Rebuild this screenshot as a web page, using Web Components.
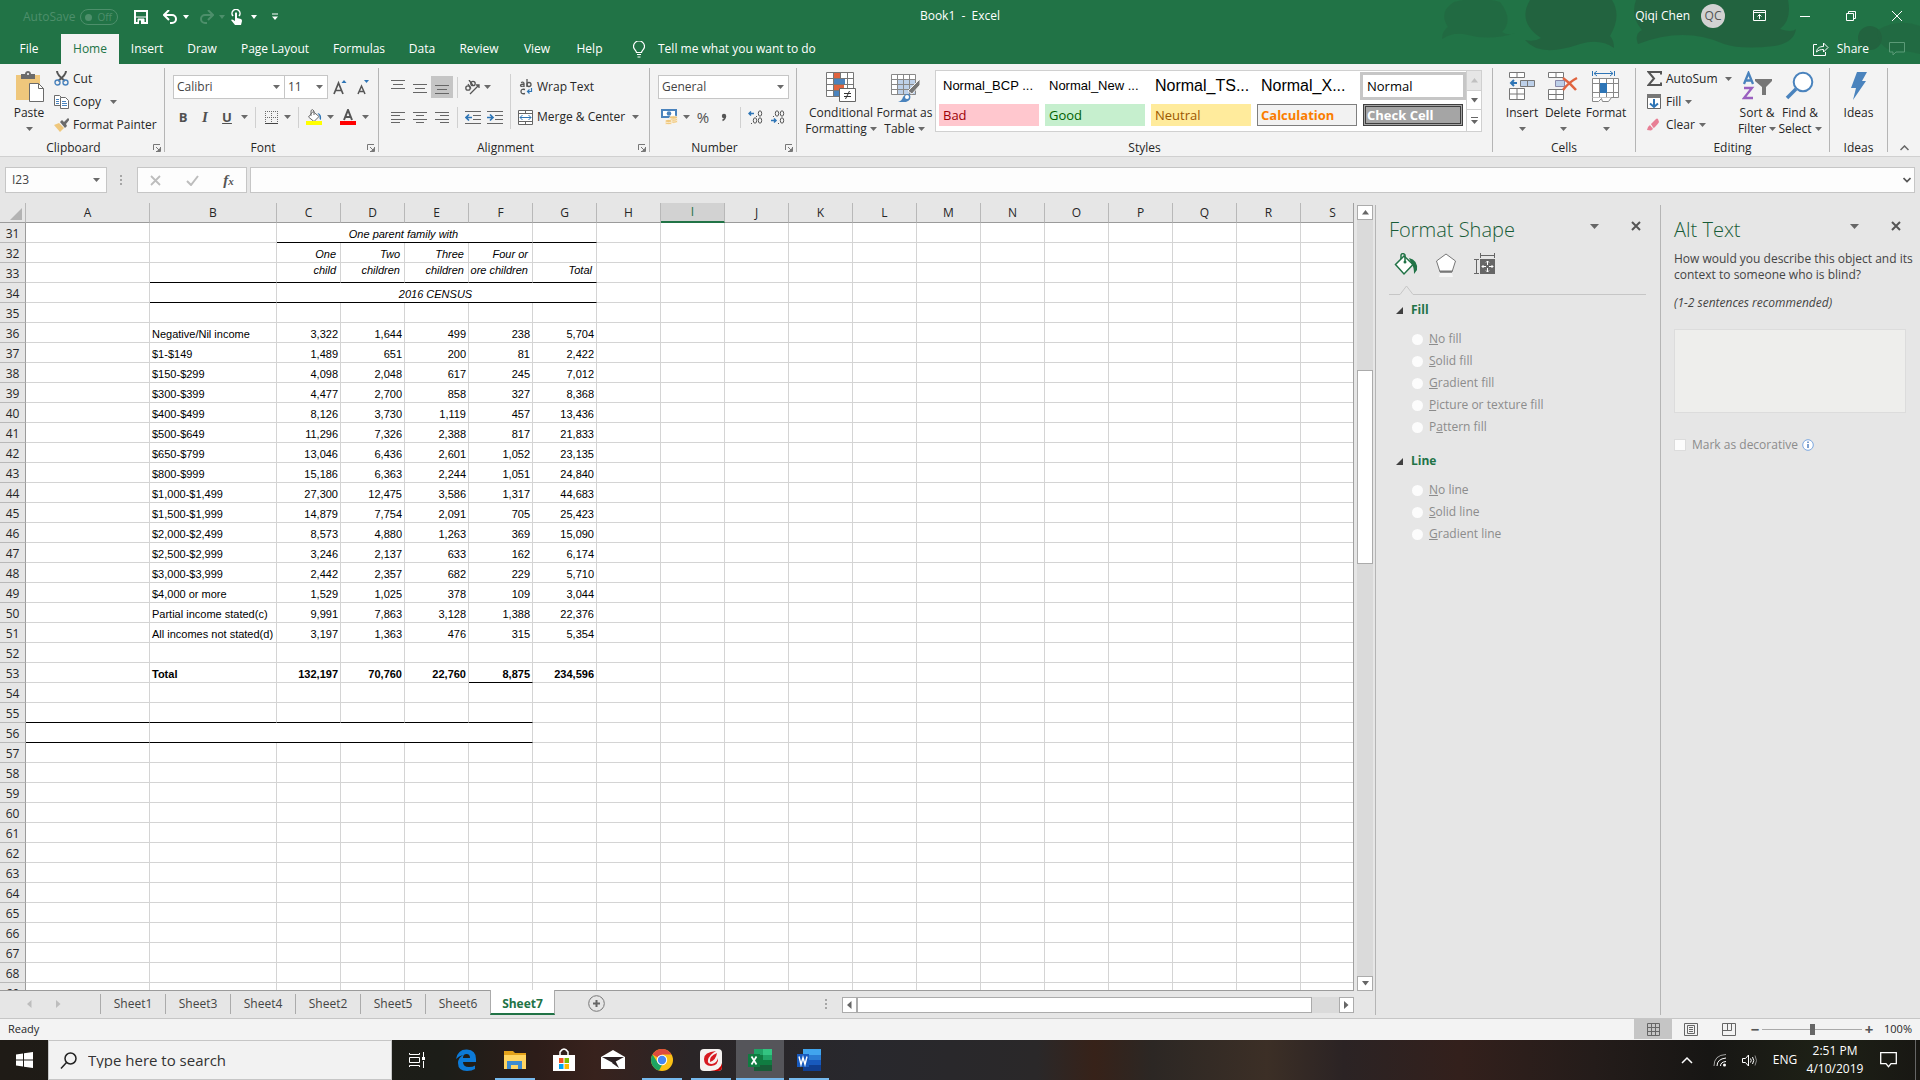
<!DOCTYPE html>
<html lang="en">
<head>
<meta charset="utf-8">
<title>Book1 - Excel</title>
<style>
    html, body {
        height: 100%;
        margin: 0;
    }
    body {
        --green: #217346;
        --ribbon: #f3f3f3;
        --chrome: #e6e6e6;
        --line: #c6c6c6;
        --ink: #262626;

        display: flex;
        flex-direction: column;
        overflow: hidden;
        background: var(--chrome);
        color: var(--ink);
        font: 12px/16px "Open Sans", "Noto Sans", sans-serif;
    }
    .workspace {
        flex: 1;
        min-height: 0;
        display: flex;
    }
    .book {
        flex: 1;
        min-width: 0;
        display: flex;
        flex-direction: column;
    }
    .stack {
        display: flex;
        flex-direction: column;
    }
    .row {
        display: flex;
        align-items: center;
        height: 22px;
    }
    .tools {
        display: flex;
        flex-direction: column;
        gap: 7px;
        padding: 8px 0 0 8px;
    }
    .tools .row:first-child {
        height: 24px;
    }
</style>
</head>
<body>
    <app-header>
        <title-bar></title-bar>
        <tab-bar></tab-bar>
    </app-header>

    <ribbon-bar>
        <ribbon-group label="Clipboard" launcher style="width:164px">
            <big-button icon="paste" caret style="width:42px;margin-left:8px">Paste</big-button>
            <div class="stack" style="margin-left:4px">
                <small-button icon="cut">Cut</small-button>
                <small-button icon="copy" caret="far">Copy</small-button>
                <small-button icon="painter">Format Painter</small-button>
            </div>
        </ribbon-group>
        <ribbon-group label="Font" launcher style="width:213px">
            <div class="tools">
                <div class="row">
                    <combo-box label="Font" value="Calibri" style="width:112px"></combo-box>
                    <combo-box label="Font size" value="11" style="width:44px"></combo-box>
                    <tool-button icon="grow" label="Increase font size" style="width:24px"></tool-button>
                    <tool-button icon="shrink" label="Decrease font size" style="width:22px"></tool-button>
                </div>
                <div class="row">
                    <tool-button label="Bold" style="width:20px"><b>B</b></tool-button>
                    <tool-button label="Italic" style="width:24px;font-family:'Liberation Serif',serif;font-size:15px"><b><i>I</i></b></tool-button>
                    <tool-button label="Underline" style="width:20px"><b><u>U</u></b></tool-button>
                    <tool-button icon="caret" label="Underline options" style="width:14px"></tool-button>
                    <tool-sep style="margin:0 4px"></tool-sep>
                    <tool-button icon="borders" label="Borders" style="width:22px"></tool-button>
                    <tool-button icon="caret" label="Border options" style="width:10px"></tool-button>
                    <tool-sep style="margin:0 5px 0 6px"></tool-sep>
                    <tool-button icon="bucket" label="Fill colour" style="width:20px"></tool-button>
                    <tool-button icon="caret" label="Fill colour options" style="width:12px"></tool-button>
                    <tool-button icon="fontcolor" label="Font colour" style="width:24px"></tool-button>
                    <tool-button icon="caret" label="Font colour options" style="width:10px"></tool-button>
                </div>
            </div>
        </ribbon-group>
        <ribbon-group label="Alignment" launcher style="width:270px">
            <div class="tools">
                <div class="row">
                    <tool-button icon="top" label="Top align" style="width:22px"></tool-button>
                    <tool-button icon="middle" label="Middle align" style="width:22px"></tool-button>
                    <tool-button icon="bottom" label="Bottom align" active style="width:22px"></tool-button>
                    <tool-sep style="margin:0 4px"></tool-sep>
                    <tool-button icon="orient" label="Orientation" style="width:20px"></tool-button>
                    <tool-button icon="caret" label="Orientation options" style="width:10px"></tool-button>
                </div>
                <div class="row">
                    <tool-button icon="left" label="Align left" style="width:22px"></tool-button>
                    <tool-button icon="center" label="Center" style="width:22px"></tool-button>
                    <tool-button icon="right" label="Align right" style="width:22px"></tool-button>
                    <tool-sep style="margin:0 4px"></tool-sep>
                    <tool-button icon="outdent" label="Decrease indent" style="width:22px"></tool-button>
                    <tool-button icon="indent" label="Increase indent" style="width:22px"></tool-button>
                </div>
            </div>
            <tool-sep style="height:55px;margin:7px 7px 0 4px"></tool-sep>
            <div class="tools" style="padding-left:0">
                <div class="row"><small-button icon="wrap">Wrap Text</small-button></div>
                <div class="row"><small-button icon="merge" caret="near">Merge &amp; Center</small-button></div>
            </div>
        </ribbon-group>
        <ribbon-group label="Number" launcher style="width:146px">
            <div class="tools">
                <div class="row"><combo-box label="Number format" value="General" style="width:131px"></combo-box></div>
                <div class="row">
                    <tool-button icon="money" label="Accounting format" style="width:22px"></tool-button>
                    <tool-button icon="caret" label="Accounting options" style="width:12px"></tool-button>
                    <tool-button label="Percent style" style="width:22px;font-size:15px">%</tool-button>
                    <tool-button icon="comma" label="Comma style" style="width:20px"></tool-button>
                    <tool-sep style="margin:0 4px 0 6px"></tool-sep>
                    <tool-button icon="incdec" label="Increase decimal" style="width:20px"></tool-button>
                    <tool-button icon="decdec" label="Decrease decimal" style="width:24px"></tool-button>
                </div>
            </div>
        </ribbon-group>
        <ribbon-group label="Styles" style="flex:1">
            <big-button icon="conditional" style="width:72px;margin-left:8px">Conditional<span slot="second">Formatting</span></big-button>
            <big-button icon="table" style="width:55px">Format as<span slot="second">Table</span></big-button>
            <style-gallery></style-gallery>
        </ribbon-group>
        <ribbon-group label="Cells" style="width:142px">
            <big-button icon="insert" caret style="width:40px;margin-left:9px">Insert</big-button>
            <big-button icon="delete" caret style="width:42px">Delete</big-button>
            <big-button icon="format" caret style="width:44px">Format</big-button>
        </ribbon-group>
        <ribbon-group label="Editing" style="width:193px">
            <div class="stack" style="width:88px;margin-left:11px">
                <small-button icon="sum" caret="near">AutoSum</small-button>
                <small-button icon="filldown" caret>Fill</small-button>
                <small-button icon="eraser" caret>Clear</small-button>
            </div>
            <big-button icon="sort" style="width:44px">Sort &amp;<span slot="second">Filter</span></big-button>
            <big-button icon="find" style="width:42px">Find &amp;<span slot="second">Select</span></big-button>
        </ribbon-group>
        <ribbon-group label="Ideas" style="width:57px">
            <big-button icon="bolt" style="width:57px">Ideas</big-button>
        </ribbon-group>
    </ribbon-bar>

    <formula-bar cell="I23"></formula-bar>

    <div class="workspace">
        <div class="book">
            <sheet-grid></sheet-grid>
            <sheet-tabs names="Sheet1,Sheet3,Sheet4,Sheet2,Sheet5,Sheet6,Sheet7" active="Sheet7"></sheet-tabs>
        </div>
        <task-pane heading="Format Shape" style="width:285px">
            <shape-options></shape-options>
        </task-pane>
        <task-pane heading="Alt Text" style="width:260px">
            <alt-text-form></alt-text-form>
        </task-pane>
    </div>

    <status-bar></status-bar>
    <win-taskbar></win-taskbar>

<script>
// name: [width, height, markup]
const ICONS = {
    caret: [7, 4, `<path d="M0 0h7L3.5 4z" fill="#6a6a6a"/>`],
    caretWhite: [6, 4, `<path d="M0 0h6L3 4z" fill="#fff"/>`],
    caretDim: [6, 4, `<path d="M0 0h6L3 4z" fill="#4d8f6b"/>`],
    launcher: [8, 8, `<path d="M.5 6V.5H7" fill="none" stroke="#777"/><path d="M3 3l3 3M7.5 3v4.500H3" fill="none" stroke="#777"/><path d="M7 4v3H4z" fill="#777"/>`],
    save: [14, 14, `<path d="M1 1h12v12H1z" fill="none" stroke="#fff" stroke-width="2"/><path d="M2 7h10M4 9h6v5H4z" fill="#fff" stroke="#fff"/><path d="M5 10.500h2V14H5z" fill="#217346"/>`],
    undo: [15, 14, `<path d="M1 5h8a4 4 0 0 1 0 8H7" fill="none" stroke="#fff" stroke-width="2"/><path d="M6 0L1 5l5 5" fill="none" stroke="#fff" stroke-width="2"/>`],
    redo: [15, 14, `<path d="M14 5H6a4 4 0 0 0 0 8h2" fill="none" stroke="#4d8f6b" stroke-width="2"/><path d="M9 0l5 5-5 5" fill="none" stroke="#4d8f6b" stroke-width="2"/>`],
    touch: [12, 17, `<path d="M2 7a4 4 0 1 1 6 0" fill="none" stroke="#fff" stroke-width="1.500"/><path d="M4 4q1-1.500 2 0v5l4 1q1 .5 1 2l-1 4H4L0 11q1-1.500 4 1z" fill="#fff"/>`],
    customize: [6, 8, `<path d="M0 1h6" stroke="#fff"/><path d="M0 3.500h6L3 7z" fill="#fff"/>`],
    ribbonmode: [13, 11, `<path d="M.5.5h12v10H.5zM.5 2.500h12" fill="none" stroke="#fff"/><path d="M6.500 9V4.500M4.500 6.500l2-2 2 2" fill="none" stroke="#fff"/>`],
    min: [10, 10, `<path d="M0 5.500h10" stroke="#fff"/>`],
    restore: [10, 10, `<path d="M.5 2.500h7v7h-7zM2.500 2.500v-2h7v7h-2" fill="none" stroke="#fff"/>`],
    close: [10, 10, `<path d="M0 0l10 10M10 0L0 10" stroke="#fff"/>`],
    bulb: [12, 17, `<path d="M3.500 11.500c0-2-3-3-3-6a5.400 5.400 0 0 1 11 0c0 3-3 4-3 6zM4 13.500h4M4.500 16h3" fill="none" stroke="#fff" stroke-width="1.200"/>`],
    share: [16, 14, `<path d="M4 2.500H.5v11h12V10" fill="none" stroke="#fff"/><path d="M3.500 10c.5-4 3-5.500 7-5.500V1l4.500 4.500L10.500 10V7.500c-3 0-5 .5-7 2.500z" fill="none" stroke="#fff"/>`],
    comment: [16, 14, `<path d="M.5.5h15v9.500H7L4 13v-3H.5z" fill="none" stroke="#5b9a77"/>`],
    paste: [30, 32, `<path d="M2 4h24v25H2z" fill="#efc77c"/><path d="M7 3h4c0-4 6-4 6 0h4v5H7z" fill="#6b6b6b"/><circle cx="14" cy="3" r="1" fill="#fff"/><path d="M15.500 12.500h9l5 5v13h-14z" fill="#fff" stroke="#6b6b6b"/><path d="M24.500 12.500v5h5" fill="none" stroke="#6b6b6b"/>`],
    cut: [15, 15, `<path d="M3 0q0 4 8 10M12 0q0 4-8 10" stroke="#555" stroke-width="2" fill="none"/><circle cx="3.500" cy="11.500" r="2.500" fill="none" stroke="#4a83bd" stroke-width="1.400"/><circle cx="11.500" cy="11.500" r="2.500" fill="none" stroke="#4a83bd" stroke-width="1.400"/>`],
    copy: [15, 14, `<path d="M.5.5h5l2 2v8h-7z" fill="#fff" stroke="#6b6b6b"/><path d="M2 4.500h3M2 6.500h3M2 8.500h3" stroke="#4a83bd"/><path d="M6.500 2.500h5l3 3v8h-8z" fill="#fff" stroke="#6b6b6b"/><path d="M8 6.500h4M8 8.500h5M8 10.500h5" stroke="#4a83bd"/>`],
    painter: [15, 14, `<path d="M0 7l5-2 5 5-4 4z" fill="#efc77c"/><path d="M6 4l2-2 2 2 4-4 1.500 1.500L12 6l1 2-2 2z" fill="#6b6b6b"/>`],
    grow: [14, 15, `<path d="M1 14L5.500 3 10 14M2.500 10.500h6" fill="none" stroke="#555" stroke-width="1.700"/><path d="M8.500 3L11 0l2.500 3z" fill="#2e75b6"/>`],
    shrink: [14, 15, `<path d="M2 14l3.500-8L9 14M3 11.500h5" fill="none" stroke="#555" stroke-width="1.500"/><path d="M8 0h5l-2.500 3z" fill="#2e75b6"/>`],
    borders: [13, 13, `<path d="M0 .5h13M0 6.500h13M.5 0v12M6.500 0v12M12.500 0v12" stroke="#6b6b6b" stroke-dasharray="1 1"/><path d="M0 12.500h13" stroke="#444"/>`],
    bucket: [16, 16, `<path d="M7 2.500l6 5-5 5L2.500 8z" fill="#fff" stroke="#6b6b6b"/><path d="M5 7V1.500Q6.500-.5 8 2v4" fill="none" stroke="#6b6b6b"/><path d="M11.500 4Q16 5 15 11q-2-1-1.500-4z" fill="#2e75b6"/><path d="M0 12h16v4H0z" fill="#ff0"/>`],
    fontcolor: [16, 16, `<path d="M4 11L8 1l4 10M5.500 8h5" fill="none" stroke="#555" stroke-width="2"/><path d="M0 12h16v4H0z" fill="red"/>`],
    top: [14, 14, `<path d="M0 .5h14M2 4.500h10M0 8.500h14" stroke="#666"/>`],
    middle: [14, 14, `<path d="M0 4.500h14M2 8.500h10M0 12.500h14" stroke="#666"/>`],
    bottom: [14, 14, `<path d="M0 5.500h14M2 9.500h10M0 13.500h14" stroke="#666"/>`],
    left: [14, 11, `<path d="M0 .5h14M0 3.500h9M0 7.500h14M0 10.500h9" stroke="#666"/>`],
    center: [14, 11, `<path d="M0 .5h14M3 3.500h8M0 7.500h14M3 10.500h8" stroke="#666"/>`],
    right: [14, 11, `<path d="M0 .5h14M5 3.500h9M0 7.500h14M5 10.500h9" stroke="#666"/>`],
    orient: [17, 15, `<g fill="none" stroke="#555" stroke-width="1.300"><circle cx="4" cy="8" r="2.200"/><path d="M4 4l3 4.500M5 0l4 5.500"/><circle cx="9" cy="3.500" r="2.200"/><path d="M6 14L15 5m-3 0h3v3"/></g>`],
    outdent: [16, 13, `<path d="M0 .5h16M8 4.500h8M8 8.500h8M0 12.500h16" stroke="#666"/><path d="M7 6.500H1M4 3.500l-3 3 3 3" fill="none" stroke="#2e75b6" stroke-width="1.700"/>`],
    indent: [16, 13, `<path d="M0 .5h16M8 4.500h8M8 8.500h8M0 12.500h16" stroke="#666"/><path d="M0 6.500h6M3 3.500l3 3-3 3" fill="none" stroke="#2e75b6" stroke-width="1.700"/>`],
    wrap: [15, 16, `<g fill="none" stroke="#555" stroke-width="1.300"><path d="M3 3.500q3-1 3 1V8M6 5q-3.500 0-3.500 1.500T6 7M9 0v8"/><circle cx="11" cy="5.500" r="2"/><path d="M7 10.500q-4-1-4 2t4 2"/></g><path d="M13.500 9v3.500H9.500m2-2l-2 2 2 2" fill="none" stroke="#2e75b6" stroke-width="1.200"/>`],
    merge: [15, 15, `<path d="M.5.5h14v14H.5zM.5 3.500h14M.5 11.500h14M7.500.5v3M7.500 11.500v3" fill="#fff" stroke="#666"/><path d="M2 7.500h11M4.500 5L2 7.500 4.500 10M10.500 5L13 7.500 10.500 10" fill="none" stroke="#2e75b6"/>`],
    money: [17, 16, `<path d="M0 0h16v9H0z" fill="#4a83bd"/><path d="M2 2h12v5H2z" fill="#fff"/><circle cx="8" cy="4.500" r="2.300" fill="#4a83bd"/><g fill="#efc77c" stroke="#fff" stroke-width=".6"><ellipse cx="12.500" cy="12.500" rx="4" ry="1.700"/><ellipse cx="12.500" cy="10.500" rx="4" ry="1.700"/><ellipse cx="12.500" cy="8.500" rx="4" ry="1.700"/><ellipse cx="7.500" cy="14" rx="3.500" ry="1.600"/><ellipse cx="7.500" cy="12" rx="3.500" ry="1.600"/></g>`],
    comma: [6, 9, `<circle cx="3" cy="3" r="2.200" fill="#555"/><path d="M4.500 3q0 3-3 4.500" fill="none" stroke="#555" stroke-width="1.400"/>`],
    incdec: [15, 14, `<path d="M6 3.500H1M3 1.500l-2 2 2 2" fill="none" stroke="#2e75b6" stroke-width="1.500"/><g fill="none" stroke="#555"><ellipse cx="12" cy="3.500" rx="1.700" ry="2.700"/><ellipse cx="7" cy="10.500" rx="1.700" ry="2.700"/><ellipse cx="12" cy="10.500" rx="1.700" ry="2.700"/></g><path d="M8 6h1v1H8zM3 13h1v1H3z" fill="#555"/>`],
    decdec: [15, 14, `<path d="M1 10.500h5M4 8.500l2 2-2 2" fill="none" stroke="#2e75b6" stroke-width="1.500"/><g fill="none" stroke="#555"><ellipse cx="7" cy="3.500" rx="1.700" ry="2.700"/><ellipse cx="12" cy="3.500" rx="1.700" ry="2.700"/><ellipse cx="12" cy="10.500" rx="1.700" ry="2.700"/></g><path d="M3 6h1v1H3zM8 13h1v1H8z" fill="#555"/>`],
    conditional: [30, 32, `<path d="M.5 1.500h27v25H.5z" fill="#fff"/><path d="M8 1h6v7H8zM8 14h10v5H8z" fill="#e0643f"/><path d="M8 8h11v6H8zM8 20h5v6H8z" fill="#4a83bd"/><path d="M.5 1.500h27v24H.5zM.5 7.500h27M.5 13.500h27M.5 19.500h27M7.500 1v25M14.500 1v7M21.500 1v25" fill="none" stroke="#777"/><path d="M13.500 17.500h16v13h-16z" fill="#fff" stroke="#666"/><path d="M18 22.500h7M18 25.500h7M23.500 20l-4 8" stroke="#333"/>`],
    table: [30, 32, `<path d="M1.500 3.500h24v20h-24z" fill="#fff"/><path d="M8 9h18v15H8z" fill="#bdd0e9"/><path d="M1.500 3.500h24v20h-24zM1.500 8.500h24M1.500 13.500h24M1.500 18.500h24M7.500 3v21M13.500 3v21M19.500 3v21" fill="none" stroke="#888"/><path d="M30 8v6l-8 9-4-3z" fill="#777" stroke="#f3f3f3"/><path d="M8 31q4-1 5-5 3-5 7-2 2 5-4 7z" fill="#4a83bd"/><circle cx="17" cy="26" r="2" fill="#fff"/>`],
    insert: [28, 30, `<path d="M1.500 1.500h15v5h-15zM9 1.500v5M1.500 17.500h15v11h-15zM9 17.500v11M1.500 23h15" fill="#fff" stroke="#777"/><path d="M12.500 9.500h14v6h-14zM19.500 9.500v6" fill="#bdd0e9" stroke="#777"/><path d="M9 12H3M6 9l-3 3 3 3" fill="none" stroke="#2e75b6" stroke-width="2"/>`],
    delete: [32, 30, `<path d="M1.500 1.500h15v5h-15zM9 1.500v5M1.500 18.500h15v10h-15zM9 18.500v10M1.500 23.500h15" fill="#fff" stroke="#777"/><path d="M8.500 9.500h9v6h-9z" fill="#bdd0e9" stroke="#88a"/><path d="M16 7q7 5 13 12M30 7q-8 4-14 12" fill="none" stroke="#e0643f" stroke-width="2.500"/>`],
    format: [30, 32, `<path d="M1.500 0v5M23.500 0v5M3 2.500h19M6 0L3 2.500 6 5M19 0l3 2.500L19 5" fill="none" stroke="#2e75b6"/><path d="M1.500 7.500h26v19h-26zM1.500 12.500h26M1.500 21.500h26M8.500 7v20M15.500 7v20M22.500 7v20" fill="#fff" stroke="#888"/><path d="M9 12h7v10H9z" fill="#2e75b6"/><path d="M1.500 26.500v4h6l3-3 1 3h6l3-4" fill="#fff" stroke="#888"/>`],
    sum: [15, 15, `<path d="M14 3.500V1H1.500L7 7.500 1.500 14H14v-2.500" fill="none" stroke="#555" stroke-width="2"/>`],
    filldown: [14, 15, `<path d="M.5.5h13v14H.5z" fill="#fff" stroke="#666"/><path d="M0 0h14v4H0z" fill="#777"/><path d="M7 5v8M3 9.500L7 13l4-3.500" fill="none" stroke="#2e75b6" stroke-width="2"/>`],
    eraser: [14, 13, `<path d="M4 6l5-5q1-1 2 0l1 3q0 1-6 7z" fill="#e87f95"/><path d="M3 7l3 4-2 1.500L0 12l1-3z" fill="#e87f95"/><path d="M3 6l4 5" stroke="#f3f3f3"/>`],
    sort: [30, 30, `<g fill="none" stroke-width="2.300"><path d="M2 13L6.500 2 11 13M3.500 9.500h6" stroke="#4a83bd"/><path d="M2 17h8L2 27h9" stroke="#9a60c0"/></g><path d="M13 8h17v2l-6 6v8h-4v-8l-7-6z" fill="#777"/>`],
    find: [30, 30, `<circle cx="18" cy="11" r="9.300" fill="#fff" stroke="#4a83bd" stroke-width="2"/><path d="M11 18l-9 9" stroke="#4a83bd" stroke-width="3.500"/>`],
    bolt: [20, 30, `<path d="M8 1h10l-5 9h4L4 29l3-12H2z" fill="#4a83bd"/>`],
    collapse: [9, 6, `<path d="M.5 5L4.500 1l4 4" fill="none" stroke="#666" stroke-width="1.500"/>`],
    expand: [8, 6, `<path d="M.5 1L4 4.500 7.500 1" fill="none" stroke="#555" stroke-width="1.700"/>`],
    cancel: [11, 11, `<path d="M1 1l9 9M10 1L1 10" stroke="#bdbdbd" stroke-width="1.800"/>`],
    accept: [13, 11, `<path d="M1 6l4 4 7-9" fill="none" stroke="#bdbdbd" stroke-width="2"/>`],
    dots: [2, 11, `<path d="M0 0h2v2H0zM0 4h2v2H0zM0 8h2v2H0z" fill="#a6a6a6"/>`],
    up: [7, 5, `<path d="M0 4.500L3.500 0 7 4.500z" fill="#666"/>`],
    upDim: [7, 5, `<path d="M0 4.500L3.500 0 7 4.500z" fill="#c0c0c0"/>`],
    down: [7, 5, `<path d="M0 0h7L3.500 4.500z" fill="#666"/>`],
    leftTri: [5, 8, `<path d="M4.500 0v8L0 4z" fill="#666"/>`],
    rightTri: [5, 8, `<path d="M0 0v8l4.500-4z" fill="#666"/>`],
    leftDim: [5, 8, `<path d="M4.500 0v8L0 4z" fill="#bdbdbd"/>`],
    rightDim: [5, 8, `<path d="M0 0v8l4.500-4z" fill="#bdbdbd"/>`],
    more: [7, 8, `<path d="M0 .5h7" stroke="#666"/><path d="M0 3h7L3.500 7z" fill="#666"/>`],
    plus: [17, 17, `<circle cx="8.500" cy="8.500" r="7.800" fill="none" stroke="#777"/><path d="M8.500 5v7M5 8.500h7" stroke="#666" stroke-width="2"/>`],
    paneCaret: [9, 5, `<path d="M0 0h9L4.500 5z" fill="#666"/>`],
    paneClose: [10, 10, `<path d="M1 1l8 8M9 1L1 9" stroke="#555" stroke-width="2"/>`],
    shapeFill: [24, 24, `<path d="M10 3l9 8.500-9 9.500-8.500-9.500z" fill="#fff" stroke="#217346" stroke-width="1.500"/><path d="M7 6V2q1.500-3 4 0v7" fill="none" stroke="#217346" stroke-width="1.500"/><circle cx="11" cy="9" r="1.500" fill="#217346"/><path d="M15 5q9 2 8 12l-3 4q0-7-2-9z" fill="#217346"/>`],
    shapeEffects: [22, 24, `<path d="M11 1l9.500 7-3.500 11H5L1.500 8z" fill="#fff" stroke="#777"/><path d="M5 18.500h12" stroke="#777" stroke-width="2"/><path d="M5 20l-1 4h14l-1-4z" fill="#fff" opacity=".6"/>`],
    shapeSize: [22, 22, `<path d="M6.500 0v5M20.500 0v5M7 2.500h13M0 6.500h5M0 20.500h5M2.500 7v13" stroke="#666"/><path d="M6 6h15v15H6z" fill="#666"/><path d="M13.500 8v4M13.500 15v4M8 13.500h4M15 13.500h4" stroke="#fff"/><path d="M12 9.500L13.500 8 15 9.500M12 17.500l1.500 1.500 1.500-1.500M9.500 12L8 13.500 9.500 15M17.500 12l1.500 1.500-1.500 1.500" fill="none" stroke="#fff"/>`],
    section: [7, 7, `<path d="M7 0v7H0z" fill="#404040"/>`],
    info: [12, 12, `<circle cx="6" cy="6" r="5.300" fill="#fff" stroke="#7ba7e0"/><path d="M6 5v4M6 2.500v1.500" stroke="#3a6fb8" stroke-width="1.300"/>`],
    normalView: [13, 13, `<path d="M.5.5h12v12H.5zM.5 4.500h12M.5 8.500h12M4.500.5v12M8.500.5v12" fill="none" stroke="#666"/>`],
    pageView: [14, 13, `<path d="M.5.5h13v12H.5zM3.500 2.500h7v8h-7zM5 4.500h4M5 6.500h4M5 8.500h4" fill="none" stroke="#666"/>`],
    breakView: [14, 13, `<path d="M.5.5h13v12H.5zM.5 7.500h9V.5M5.500.5v7" fill="none" stroke="#666"/>`],
    windows: [17, 16, `<path d="M0 2.500L7 1.500V7.500H0zM8 1.300L17 0v7.500H8zM0 8.500h7v6L0 13.500zM8 8.500h9V16l-9-1.300z" fill="#fff"/>`],
    search: [17, 17, `<circle cx="10.500" cy="6.500" r="5.500" fill="none" stroke="#222" stroke-width="1.500"/><path d="M6.500 10.500L1 16.500" stroke="#222" stroke-width="1.500"/>`],
    taskview: [17, 16, `<path d="M.5 1v1.500h10V1M.5 5.500h10v5H.5zM.5 15v-1.500h10V15M14.500 0v5M14.500 9v7" fill="none" stroke="#fff"/><path d="M13 5h3v3h-3z" fill="#fff"/>`],
    edge: [22, 22, `<path d="M1 10Q3 0 12 .5 21 1 21 10v3H8q0 5 6 5 4 0 6-1.500V20q-3 2-8 2-9 0-9-8 0-5 5-8-4 1-7 4zM8 9h7q0-4-3.500-4T8 9z" fill="#0c7ad8"/>`],
    explorer: [24, 20, `<path d="M1 1h9l2 2h11v5H1z" fill="#e3a21a"/><path d="M1 5h22v14H1z" fill="#ffd561"/><path d="M4 19v-8h15v8h-4v-4H8v4z" fill="#3c8bd0"/>`],
    store: [24, 24, `<path d="M8 7V4q4-6 8 0v3" fill="none" stroke="#fff" stroke-width="1.500"/><path d="M1 7h22v16H1z" fill="#fff"/><path d="M7 10h4.500v5H7z" fill="#f25022"/><path d="M12.500 10H17v5h-4.500z" fill="#7fba00"/><path d="M7 16h4.500v5H7z" fill="#00a4ef"/><path d="M12.500 16H17v5h-4.500z" fill="#ffb900"/>`],
    mail: [24, 20, `<path d="M0 7l12-7 12 7v12H0z" fill="#fff"/><path d="M1 7h22l-11 6z" fill="#2b2022"/><path d="M14 10l4 8-7-5z" fill="#2b2022"/>`],
    chrome: [22, 22, `<circle cx="11" cy="11" r="11" fill="#fbc116"/><path d="M11 11L1.500 5.500A11 11 0 0 1 20.500 5.500H11z" fill="#dd4b3e"/><path d="M1.500 5.500L7 14l4 2-3 5.600A11 11 0 0 1 1.500 5.500z" fill="#1da462"/><circle cx="11" cy="11" r="5.200" fill="#fff"/><circle cx="11" cy="11" r="4.200" fill="#4587f3"/>`],
    trend: [22, 22, `<rect width="22" height="22" rx="4" fill="#f5f2f0"/><path d="M10 22q11-1 12-8v4q0 4-4 4z" fill="#c40000"/><path d="M16 2Q4 3 4 10q0 7 7 7 8-1 7-8-1 5-6 6-5 0-4-4 1-5 8-9z" fill="#d71920"/><path d="M17 4q-8 3-7 9 6-2 7-9z" fill="#d71920"/>`],
    excel: [24, 22, `<path d="M6 0h18v22H6z" fill="#21a366"/><path d="M15 0h9v6h-9z" fill="#33c481"/><path d="M6 6h9v5H6z" fill="#107c41"/><path d="M15 11h9v5h-9zM6 11h9v5H6z" fill="#107c41"/><path d="M6 16h18v6H6z" fill="#185c37"/><path d="M0 5h12v13H0z" fill="#107c41"/><path d="M3.500 7.500l5 8M8.500 7.500l-5 8" stroke="#fff" stroke-width="1.700"/>`],
    word: [24, 22, `<path d="M6 0h18v6H6z" fill="#41a5ee"/><path d="M6 6h18v5H6z" fill="#2b7cd3"/><path d="M6 11h18v5H6z" fill="#185abd"/><path d="M6 16h18v6H6z" fill="#103f91"/><path d="M0 5h12v13H0z" fill="#185abd"/><path d="M2 7.500l2 8 2-7 2 7 2-8" fill="none" stroke="#fff" stroke-width="1.400"/>`],
    trayUp: [12, 8, `<path d="M1 7l5-5 5 5" fill="none" stroke="#fff" stroke-width="1.500"/>`],
    wifi: [14, 14, `<g fill="none" stroke="#fff"><path d="M1 13Q1 2 13 1.500" opacity=".6"/><path d="M4 13q0-7 9-8M7.500 13q0-4 5.500-4.500"/></g><circle cx="11.500" cy="12" r="1.500" fill="#fff"/>`],
    speaker: [16, 13, `<path d="M.5 4.500h3l3-3.500v11l-3-3.500h-3z" fill="none" stroke="#fff"/><path d="M8.500 4.500q1.500 2 0 4M10.500 3q2.500 3.500 0 7" fill="none" stroke="#fff"/><path d="M13 1.500q3 5 0 10" fill="none" stroke="#888"/>`],
    notify: [17, 16, `<path d="M.7.7h15.600v11H11l-2.500 3-2.500-3H.7z" fill="none" stroke="#fff" stroke-width="1.300"/>`],
};

const svg = name => {
    const [w, h, body] = ICONS[name];
    return `<svg width="${w}" height="${h}" viewBox="0 0 ${w} ${h}" aria-hidden="true">${body}</svg>`;
};

const RESET = `
    * { box-sizing: border-box; }
    svg { display: block; flex: none; }
    button, input, select, textarea {
        margin: 0;
        padding: 0;
        border: 0;
        outline: 0;
        border-radius: 0;
        background: none;
        color: inherit;
        font: inherit;
    }
`;

class BaseElement extends HTMLElement {
    connectedCallback() {
        if (this.shadowRoot) return;
        this.attachShadow({ mode: "open" });
        const template = document.createElement("template");
        template.innerHTML = `<style>${RESET}</style>${this.render()}`;
        this.shadowRoot.appendChild(template.content.cloneNode(true));
    }
}

class AppHeader extends BaseElement {
    render() {
        return /*html*/ `
        <style>
            :host { display: block; position: relative; background: var(--green); color: #fff; }
            .art { position: absolute; top: 0; right: 0; }
            .content { position: relative; }
        </style>
        <svg class="art" width="500" height="64" viewBox="0 0 500 64" fill="#23603e">
            <g opacity=".8">
                <path d="M34 2q24-6 46 0 14 18 2 30 6 4 14 1-26 8-48 2-14-4-26 4 0-8 6-12Q18 12 34 2z" opacity=".5"/>
                <path d="M110 0h82q10 16-2 36 4 4 4 12-14-10-34-4-40 14-55-4 10 2 16-2-24-16-11-38z"/>
                <path d="M216 0h152q4 20-8 29 12 4 16 0-2 14-22 17-32 4-50-2-40-18-86 0-4-10 4-14-12-14-6-30z"/>
                <circle cx="450" cy="38" r="12"/>
                <path d="M458 30q20-12 42-4v28q-16-4-30-4-14-6-12-20z" opacity=".5"/>
            </g>
        </svg>
        <div class="content"><slot></slot></div>`;
    }
}

class TitleBar extends BaseElement {
    render() {
        return /*html*/ `
        <style>
            :host {
                display: grid;
                grid-template-columns: 1fr auto 1fr;
                align-items: center;
                height: 34px;
                padding-bottom: 3px;
                box-sizing: border-box;
            }
            .quick, .window { display: flex; align-items: center; }
            .quick { padding-left: 23px; padding-top: 3px; }
            .window { justify-content: flex-end; }
            .dim { color: #4d8f6b; }
            .toggle {
                display: flex;
                align-items: center;
                justify-content: space-between;
                width: 38px;
                height: 16px;
                margin: 0 16px 0 6px;
                padding: 0 5px 0 4px;
                border: 1px solid #4d8f6b;
                border-radius: 8px;
                font-size: 10px;
                color: #4d8f6b;
            }
            .toggle::before {
                content: "";
                width: 7px;
                height: 7px;
                border-radius: 50%;
                background: #4d8f6b;
            }
            .quick .label { width: 51px; }
            .pair { display: flex; align-items: center; gap: 5px; margin-left: 10px; }
            .undo { margin-left: 15px; }
            .touch { margin-left: 6px; gap: 8px; }
            .last { margin-left: 15px; }
            .title { white-space: pre; }
            .avatar {
                width: 24px;
                height: 24px;
                margin: 0 11px;
                border-radius: 50%;
                background: #d2d2d2;
                color: #555;
                line-height: 24px;
                text-align: center;
            }
            .window button { width: 46px; height: 30px; display: grid; place-items: center; }
        </style>
        <div class="quick">
            <span class="dim label">AutoSave</span>
            <button class="toggle">Off</button>
            <button aria-label="Save">${svg("save")}</button>
            <button class="pair undo" aria-label="Undo">${svg("undo")}${svg("caretWhite")}</button>
            <button class="pair" aria-label="Redo">${svg("redo")}${svg("caretDim")}</button>
            <button class="pair touch" aria-label="Touch mode">${svg("touch")}${svg("caretWhite")}</button>
            <button class="last" aria-label="Customize toolbar">${svg("customize")}</button>
        </div>
        <div class="title">Book1  -  Excel</div>
        <div class="window">
            <span>Qiqi Chen</span><span class="avatar">QC</span>
            <button aria-label="Ribbon display options">${svg("ribbonmode")}</button>
            <button aria-label="Minimize">${svg("min")}</button>
            <button aria-label="Restore">${svg("restore")}</button>
            <button aria-label="Close">${svg("close")}</button>
        </div>`;
    }
}

class TabBar extends BaseElement {
    render() {
        const tabs = [["File", 58], ["Home", 58], ["Insert", 56], ["Draw", 54], ["Page Layout", 92], ["Formulas", 76],
            ["Data", 50], ["Review", 64], ["View", 52], ["Help", 53]];
        return /*html*/ `
        <style>
            :host { display: flex; height: 30px; }
            nav { display: flex; margin-left: 3px; }
            button { height: 30px; text-align: center; white-space: nowrap; }
            .File { padding-right: 6px; }
            .Home { background: var(--ribbon); color: var(--green); }
            .tell, .share { display: flex; align-items: center; gap: 8px; }
            .tell { gap: 13px; margin-left: 17px; }
            .share { margin-left: auto; }
            .comment { margin: 0 15px 0 20px; }
        </style>
        <nav>${tabs.map(([name, width]) => `<button class="${name}" style="width:${width}px">${name}</button>`).join("")}</nav>
        <button class="tell">${svg("bulb")}Tell me what you want to do</button>
        <button class="share">${svg("share")}Share</button>
        <button class="comment" aria-label="Comments">${svg("comment")}</button>`;
    }
}

class RibbonBar extends BaseElement {
    render() {
        return /*html*/ `
        <style>
            :host {
                display: flex;
                height: 93px;
                background: var(--ribbon);
                border-bottom: 1px solid #d0d0d0;
                box-sizing: border-box;
            }
            button { align-self: flex-end; width: 32px; height: 16px; display: grid; place-items: center; }
        </style>
        <slot></slot>
        <button aria-label="Collapse the ribbon">${svg("collapse")}</button>`;
    }
}

class RibbonGroup extends BaseElement {
    render() {
        return /*html*/ `
        <style>
            :host {
                display: flex;
                flex-direction: column;
                flex: none;
                position: relative;
                padding-right: 1px;
            }
            :host::after {
                content: "";
                position: absolute;
                top: 4px;
                right: 0;
                bottom: 4px;
                width: 1px;
                background: #b5b5b5;
            }
            .body { display: flex; flex: 1; min-height: 0; padding-top: 3px; }
            .foot { display: flex; align-items: center; height: 16px; }
            .foot span { flex: 1; text-align: center; }
            .foot button { width: 17px; padding-left: 6px; }
        </style>
        <div class="body"><slot></slot></div>
        <div class="foot"><span>${this.getAttribute("label")}</span>${this.hasAttribute("launcher") ? `<button aria-label="${this.getAttribute("label")} settings">${svg("launcher")}</button>` : ""}</div>`;
    }
}

class BigButton extends BaseElement {
    render() {
        const second = this.querySelector("[slot=second]");
        return /*html*/ `
        <style>
            :host { display: block; flex: none; }
            button { display: flex; flex-direction: column; align-items: center; width: 100%; padding-top: 4px; white-space: nowrap; }
            .icon { height: 34px; }
            .second { display: flex; align-items: center; gap: 3px; height: 16px; }
        </style>
        <button>
            <span class="icon">${svg(this.getAttribute("icon"))}</span>
            <span><slot></slot></span>
            <span class="second">${second || this.hasAttribute("caret") ? `<slot name="second"></slot>${svg("caret")}` : ""}</span>
        </button>`;
    }
}

class SmallButton extends BaseElement {
    render() {
        const caret = this.getAttribute("caret");
        return /*html*/ `
        <style>
            :host { display: block; }
            button { display: flex; align-items: center; gap: 4px; height: 23px; white-space: nowrap; }
            .icon { width: 15px; }
            .far { margin-left: 5px; }
            .near { margin-left: 3px; }
        </style>
        <button>
            <span class="icon">${svg(this.getAttribute("icon"))}</span>
            <slot></slot>
            ${caret === null ? "" : `<span class="${caret}">${svg("caret")}</span>`}
        </button>`;
    }
}

class ToolButton extends BaseElement {
    render() {
        const icon = this.getAttribute("icon");
        return /*html*/ `
        <style>
            :host { display: block; flex: none; color: #505050; font-size: 13px; }
            :host([active]) { background: #c5c5c5; }
            button { display: grid; place-items: center; width: 100%; height: 22px; }
        </style>
        <button aria-label="${this.getAttribute("label")}">${icon ? svg(icon) : "<slot></slot>"}</button>`;
    }
}

class ToolSep extends BaseElement {
    render() {
        return `<style>:host { display: block; flex: none; width: 1px; height: 21px; background: #d0d0d0; }</style>`;
    }
}

class ComboBox extends BaseElement {
    render() {
        return /*html*/ `
        <style>
            :host { display: grid; align-items: center; height: 24px; background: #fff; border: 1px solid var(--line); box-sizing: border-box; color: #444; }
            :host(:nth-of-type(2)) { margin-left: -1px; }
            select { grid-area: 1 / 1; width: 100%; height: 22px; padding-left: 3px; appearance: none; }
            svg { grid-area: 1 / 1; justify-self: end; margin-right: 4px; pointer-events: none; }
        </style>
        <select aria-label="${this.getAttribute("label")}"><option>${this.getAttribute("value")}</option></select>
        ${svg("caret")}`;
    }
}

class StyleGallery extends BaseElement {
    render() {
        return /*html*/ `
        <style>
            :host { display: flex; flex: 1; height: 62px; margin: 3px 10px 0 3px; border: 1px solid #d0d0d0; background: #fff; box-sizing: border-box; }
            .cells { flex: 1; display: grid; grid-template-columns: repeat(5, 1fr); grid-template-rows: 22px 22px; gap: 7px 6px; padding: 4px 3px; }
            .cells button { padding: 0 4px; text-align: left; white-space: nowrap; overflow: hidden; color: #000; font-size: 13px; }
            .arial { font-family: "Liberation Sans", Arial, sans-serif; }
            .cells .large { font-size: 16px; }
            .cells .on { outline: 3px solid #c6c6c6; }
            .cells .bad { background: #ffc7ce; color: #9c0006; }
            .cells .good { background: #c6efce; color: #006100; }
            .cells .neutral { background: #ffeb9c; color: #9c5700; }
            .cells .calc { background: #f2f2f2; border: 1px solid #7f7f7f; color: #fa7d00; font-weight: bold; padding: 0 3px; }
            .cells .check { background: #a5a5a5; border: 3px double #3f3f3f; color: #fff; font-weight: bold; padding: 0 1px; line-height: 14px; }
            .steps { display: grid; grid-template-rows: 20px 19px 1fr; width: 15px; border-left: 1px solid #d0d0d0; }
            .steps button { display: grid; place-items: center; border-bottom: 1px solid #d0d0d0; }
            .steps button:first-child { background: #e6e6e6; }
            .steps button:last-child { border: 0; }
        </style>
        <div class="cells">
            <button class="arial">Normal_BCP ...</button>
            <button class="arial">Normal_New ...</button>
            <button class="arial large">Normal_TS...</button>
            <button class="arial large">Normal_X...</button>
            <button class="on">Normal</button>
            <button class="bad">Bad</button>
            <button class="good">Good</button>
            <button class="neutral">Neutral</button>
            <button class="calc">Calculation</button>
            <button class="check">Check Cell</button>
        </div>
        <div class="steps">
            <button aria-label="Previous row">${svg("upDim")}</button>
            <button aria-label="Next row">${svg("down")}</button>
            <button aria-label="More styles">${svg("more")}</button>
        </div>`;
    }
}

class FormulaBar extends BaseElement {
    render() {
        return /*html*/ `
        <style>
            :host { display: flex; align-items: center; padding: 10px 5px; }
            .box { display: flex; align-items: center; height: 26px; border: 1px solid var(--line); background: #fdfdfd; }
            .name { width: 102px; padding-right: 6px; }
            .name input { flex: 1; min-width: 0; padding-left: 6px; color: #444; }
            .dots { margin: 0 15px 0 13px; }
            .fx { width: 110px; justify-content: space-around; }
            .fx i { font: italic bold 15px "Liberation Serif", serif; color: #555; }
            .fx small { font-size: 11px; }
            .formula { flex: 1; margin-left: 3px; padding-right: 3px; }
            .formula input { flex: 1; }
        </style>
        <div class="box name"><input aria-label="Name box" value="${this.getAttribute("cell")}"><button aria-label="Names">${svg("caret")}</button></div>
        <div class="dots">${svg("dots")}</div>
        <div class="box fx">
            <button aria-label="Cancel">${svg("cancel")}</button>
            <button aria-label="Enter">${svg("accept")}</button>
            <button aria-label="Insert function"><i>f<small>x</small></i></button>
        </div>
        <div class="box formula"><input aria-label="Formula"><button aria-label="Expand formula bar">${svg("expand")}</button></div>`;
    }
}

const INCOME = {
    36: ["Negative/Nil income", "3,322", "1,644", "499", "238", "5,704"],
    37: ["$1-$149", "1,489", "651", "200", "81", "2,422"],
    38: ["$150-$299", "4,098", "2,048", "617", "245", "7,012"],
    39: ["$300-$399", "4,477", "2,700", "858", "327", "8,368"],
    40: ["$400-$499", "8,126", "3,730", "1,119", "457", "13,436"],
    41: ["$500-$649", "11,296", "7,326", "2,388", "817", "21,833"],
    42: ["$650-$799", "13,046", "6,436", "2,601", "1,052", "23,135"],
    43: ["$800-$999", "15,186", "6,363", "2,244", "1,051", "24,840"],
    44: ["$1,000-$1,499", "27,300", "12,475", "3,586", "1,317", "44,683"],
    45: ["$1,500-$1,999", "14,879", "7,754", "2,091", "705", "25,423"],
    46: ["$2,000-$2,499", "8,573", "4,880", "1,263", "369", "15,090"],
    47: ["$2,500-$2,999", "3,246", "2,137", "633", "162", "6,174"],
    48: ["$3,000-$3,999", "2,442", "2,357", "682", "229", "5,710"],
    49: ["$4,000 or more", "1,529", "1,025", "378", "109", "3,044"],
    50: ["Partial income stated(c)", "9,991", "7,863", "3,128", "1,388", "22,376"],
    51: ["All incomes not stated(d)", "3,197", "1,363", "476", "315", "5,354"],
    53: ["Total", "132,197", "70,760", "22,760", "8,875", "234,596"],
};
const HEADS = {
    32: ["", "One", "Two", "Three", "Four or", ""],
    33: ["", "child", "children", "children", "ore children", "Total"],
};
// start column, span, text
const MERGED = {
    31: ["C", 4, "One parent family with"],
    34: ["C", 5, "2016 CENSUS"],
    56: ["B", 5, ""],
};
// columns whose cells carry a black bottom border
const RULES = { 31: "CDEFG", 33: "BCDEFG", 34: "BCDEFG", 53: "F", 55: "ABCDEF", 56: "ABCDEF" };
const COLUMNS = [..."ABCDEFGHIJKLMNOPQRS"];

class SheetGrid extends BaseElement {
    row(n) {
        const data = INCOME[n] || HEADS[n] || [];
        const merged = MERGED[n];
        let cells = "";
        for (let i = 0; i < COLUMNS.length; i++) {
            const letter = COLUMNS[i];
            const rule = (RULES[n] || "").includes(letter) ? "rule" : "";
            if (merged && merged[0] === letter) {
                cells += `<td class="merged ${rule}" colspan="${merged[1]}">${merged[2]}</td>`;
                i += merged[1] - 1;
                continue;
            }
            const text = i > 0 ? data[i - 1] || "" : "";
            cells += `<td class="${rule} ${i === 1 ? "name" : ""}">${text}</td>`;
        }
        const kind = n === 53 ? "total" : HEADS[n] ? `head head${n}` : "";
        return `<tr class="${kind}"><th scope="row">${n}</th>${cells}</tr>`;
    }

    render() {
        const rows = Array.from({ length: 39 }, (_, i) => this.row(31 + i)).join("");
        return /*html*/ `
        <style>
            :host { display: flex; flex: 1; min-height: 0; }
            .view { flex: 1; min-width: 0; overflow: hidden; border-right: 1px solid #a0a0a0; border-bottom: 1px solid #9b9b9b; background: #fff; }
            table { width: 1365px; table-layout: fixed; border-collapse: separate; border-spacing: 0; }
            th { padding: 0; background: var(--chrome); font-weight: normal; color: #262626; }
            thead th { height: 20px; border-right: 1px solid #b8b8b8; border-bottom: 1px solid #9b9b9b; }
            thead th.on { background: #d2d2d2; color: var(--green); border-bottom: 2px solid var(--green); }
            tbody th { padding-top: 2px; border-right: 1px solid #9b9b9b; border-bottom: 1px solid #b8b8b8; }
            thead th svg { margin: 3px 0 0 10px; }
            tbody th, td { height: 20px; line-height: 16px; }
            td {
                padding: 3px 2px 0 0;
                border-right: 1px solid #d4d4d4;
                border-bottom: 1px solid #d4d4d4;
                font: 11px/16px "Liberation Sans", Arial, sans-serif;
                color: #000;
                text-align: right;
                white-space: nowrap;
                overflow: hidden;
            }
            .name { padding-left: 2px; text-align: left; }
            .rule { border-bottom-color: #000; }
            .merged, .head td { font-style: italic; }
            .merged { text-align: center; padding-right: 2px; }
            .head td { padding-right: 4px; }
            .head33 td { padding-top: 0; line-height: 15px; vertical-align: top; }
            .total td { font-weight: bold; }
            .scroll { display: flex; flex-direction: column; width: 16px; margin: 2px 2px 0 3px; background: #dadada; }
            .scroll button { height: 15px; border: 1px solid #ababab; background: #fff; display: grid; place-items: center; }
            .before { flex: 151; }
            .scroll .thumb { flex: 192; }
            .after { flex: 414; }
        </style>
        <div class="view">
            <table>
                <colgroup><col style="width:26px"><col style="width:124px"><col style="width:127px"></colgroup>
                <thead><tr><th><svg width="12" height="12"><path d="M12 0v12H0z" fill="#b3b3b3"/></svg></th>${COLUMNS.map(c => `<th scope="col" class="${c === "I" ? "on" : ""}">${c}</th>`).join("")}</tr></thead>
                <tbody>${rows}</tbody>
            </table>
        </div>
        <div class="scroll">
            <button aria-label="Scroll up">${svg("up")}</button>
            <div class="before"></div>
            <button class="thumb" aria-label="Vertical position"></button>
            <div class="after"></div>
            <button aria-label="Scroll down">${svg("down")}</button>
        </div>`;
    }
}

class SheetTabs extends BaseElement {
    render() {
        const active = this.getAttribute("active");
        const tabs = this.getAttribute("names").split(",")
            .map(name => `<button class="tab ${name === active ? "on" : ""}">${name}</button>`).join("");
        return /*html*/ `
        <style>
            :host { display: flex; align-items: flex-start; height: 27px; padding-right: 21px; }
            .nav { display: flex; gap: 24px; width: 100px; height: 25px; padding-left: 27px; align-items: center; }
            .tab { width: 65px; height: 20px; margin-top: 3px; border-left: 1px solid #ababab; color: #444; }
            .tab.on { height: 25px; margin-top: -1px; padding-top: 4px; border-right: 1px solid #ababab; border-bottom: 2px solid var(--green); background: #fff; color: var(--green); font-weight: bold; position: relative; }
            .add { margin: 4px 0 0 33px; }
            .dots { margin: 8px 15px 0 auto; }
            .scroll { display: flex; width: 512px; height: 16px; margin-top: 6px; background: #dadada; }
            .scroll button { width: 15px; border: 1px solid #ababab; background: #fff; display: grid; place-items: center; }
            .scroll .thumb { flex: 456; }
            .after { flex: 27; }
        </style>
        <div class="nav"><button aria-label="Previous sheet">${svg("leftDim")}</button><button aria-label="Next sheet">${svg("rightDim")}</button></div>
        ${tabs}
        <button class="add" aria-label="New sheet">${svg("plus")}</button>
        <span class="dots">${svg("dots")}</span>
        <div class="scroll">
            <button aria-label="Scroll left">${svg("leftTri")}</button>
            <button class="thumb" aria-label="Horizontal position"></button>
            <div class="after"></div>
            <button aria-label="Scroll right">${svg("rightTri")}</button>
        </div>`;
    }
}

class TaskPane extends BaseElement {
    render() {
        return /*html*/ `
        <style>
            :host { display: block; flex: none; margin: 2px 0 3px; padding: 8px 14px 0 13px; border-left: 1px solid #b5b5b5; box-sizing: border-box; }
            header { display: flex; align-items: flex-start; }
            h2 { flex: 1; margin: 0; font-size: 20px; line-height: 34px; font-weight: 300; color: #185c37; }
            header button { margin-top: 8px; height: 10px; display: grid; place-items: center; }
            header .shut { margin: 8px 5px 0 32px; }
        </style>
        <header><h2>${this.getAttribute("heading")}</h2><button aria-label="Pane options">${svg("paneCaret")}</button><button class="shut" aria-label="Close pane">${svg("paneClose")}</button></header>
        <slot></slot>`;
    }
}

class ShapeOptions extends BaseElement {
    section(title, key, options) {
        return `
        <h3>${svg("section")}${title}</h3>
        ${options.map(text => `<label><input type="radio" name="${key}" disabled><span>${text}</span></label>`).join("")}`;
    }

    render() {
        return /*html*/ `
        <style>
            :host { display: block; color: #8c8c8c; }
            .kinds { display: flex; align-items: flex-start; gap: 17px; height: 37px; padding: 6px 0 0 5px; }
            .pointer { display: flex; height: 12px; margin-bottom: 6px; }
            .pointer::before, .pointer::after { content: ""; height: 11px; border-bottom: 1px solid var(--line); box-sizing: border-box; }
            .pointer::before { width: 11px; }
            .pointer::after { flex: 1; }
            h3 { display: flex; align-items: center; gap: 8px; margin: 0; padding-left: 7px; font-size: 12px; line-height: 16px; color: var(--green); }
            h3:not(:first-of-type) { margin-top: 15px; }
            label { display: flex; align-items: center; gap: 6px; height: 22px; padding-left: 23px; }
            h3 + label { margin-top: 10px; }
            input { appearance: none; width: 11px; height: 11px; border-radius: 50%; background: #fcfcfc; }
        </style>
        <div class="kinds">
            <button aria-label="Fill and line">${svg("shapeFill")}</button>
            <button aria-label="Effects">${svg("shapeEffects")}</button>
            <button aria-label="Size and properties">${svg("shapeSize")}</button>
        </div>
        <div class="pointer"><svg width="13" height="11"><path d="M0 10.500L6.500 2 13 10.500" fill="none" stroke="#c6c6c6"/></svg></div>
        ${this.section("Fill", "fill", ["<u>N</u>o fill", "<u>S</u>olid fill", "<u>G</u>radient fill", "<u>P</u>icture or texture fill", "P<u>a</u>ttern fill"])}
        ${this.section("Line", "line", ["<u>N</u>o line", "<u>S</u>olid line", "<u>G</u>radient line"])}`;
    }
}

class AltTextForm extends BaseElement {
    render() {
        return /*html*/ `
        <style>
            :host { display: block; color: #444; }
            p { margin: 4px -14px 12px 0; }
            textarea { display: block; width: 100%; height: 84px; margin-top: 18px; border: 1px solid #dcdcdc; background: #eeeeec; resize: none; }
            label { display: flex; align-items: center; gap: 6px; margin-top: 24px; color: #8c8c8c; }
            input { appearance: none; width: 12px; height: 12px; background: #fcfcfc; border: 1px solid #dcdcdc; }
            label svg { margin-left: -2px; }
        </style>
        <p id="ask">How would you describe this object and its context to someone who is blind?</p>
        <p><i>(1-2 sentences recommended)</i></p>
        <textarea aria-labelledby="ask" disabled></textarea>
        <label><input type="checkbox" disabled>Mark as decorative ${svg("info")}</label>`;
    }
}

class StatusBar extends BaseElement {
    render() {
        return /*html*/ `
        <style>
            :host { display: flex; align-items: center; height: 22px; padding: 0 8px 1px; border-top: 1px solid var(--line); background: var(--ribbon); box-sizing: border-box; font-size: 11px; }
            .ready { flex: 1; }
            .view { display: grid; place-items: center; width: 38px; height: 20px; }
            .view.on { background: #c5c5c5; }
            .step { width: 14px; font-size: 15px; font-weight: bold; color: #555; }
            input { appearance: none; width: 100px; height: 12px; background: linear-gradient(#aaa, #aaa) center / 100% 1px no-repeat; }
            input::-webkit-slider-thumb { appearance: none; width: 5px; height: 11px; background: #666; }
            output { margin-left: 8px; width: 28px; text-align: right; }
        </style>
        <span class="ready">Ready</span>
        <button class="view on" aria-label="Normal">${svg("normalView")}</button>
        <button class="view" aria-label="Page layout">${svg("pageView")}</button>
        <button class="view" aria-label="Page break preview">${svg("breakView")}</button>
        <button class="step" aria-label="Zoom out">−</button>
        <input type="range" aria-label="Zoom" min="0" max="200" value="100">
        <button class="step" aria-label="Zoom in">+</button>
        <output>100%</output>`;
    }
}

class WinTaskbar extends BaseElement {
    render() {
        const apps = [["taskview", "Task view", ""], ["edge", "Edge", ""], ["explorer", "File Explorer", "open"], ["store", "Store", ""],
            ["mail", "Mail", ""], ["chrome", "Chrome", "open"], ["trend", "Security", "open"], ["excel", "Excel", "open on"], ["word", "Word", "open"]];
        return /*html*/ `
        <style>
            :host {
                display: flex;
                align-items: center;
                height: 40px;
                color: #fff;
                background: linear-gradient(to right, #1f1b16 0, #1c1d18 23%, #2d1d19 28%, #38221d 31%, #2a2527 36%, #28282d 45%,
                    #2a2829 54%, #372219 57%, #2c2724 60%, #3c2f26 66%, #2b2324 70%, #33201c 76%, #241c1a 83%, #171614 89%, #1e2116 95%, #181713 100%);
            }
            .start, .app, .tray button { display: grid; place-items: center; height: 40px; }
            .start { width: 48px; }
            .search { display: flex; align-items: center; width: 344px; height: 40px; margin-right: 1px; background: #f2f2f2; border: 1px solid #c6c6c6; padding-left: 11px; gap: 11px; }
            .search input { flex: 1; font-size: 15px; }
            .search input::placeholder { color: #333; opacity: 1; }
            .app { width: 48px; margin-right: 1px; }
            .open { background: linear-gradient(#76b9ed, #76b9ed) center bottom / 40px 2px no-repeat; }
            .on { background: linear-gradient(#76b9ed, #76b9ed) center bottom / 48px 2px no-repeat, #55555a; }
            .tray { display: flex; align-items: center; margin-left: auto; padding-right: 4px; }
            .tray button { width: 38px; }
            .tray .net { width: 28px; }
            .tray .sound { width: 32px; }
            .tray .clock { width: 62px; line-height: 18px; align-content: center; }
            .tray .note { width: 44px; }
            .desk { width: 1px; height: 40px; background: #666; margin-left: 5px; }
        </style>
        <button class="start" aria-label="Start">${svg("windows")}</button>
        <label class="search">${svg("search")}<input placeholder="Type here to search"></label>
        ${apps.map(([icon, label, state]) => `<button class="app ${state}" aria-label="${label}">${svg(icon)}</button>`).join("")}
        <div class="tray">
            <button aria-label="Show hidden icons">${svg("trayUp")}</button>
            <button class="net" aria-label="Network">${svg("wifi")}</button>
            <button class="sound" aria-label="Volume">${svg("speaker")}</button>
            <button>ENG</button>
            <button class="clock"><span>2:51 PM</span><span>4/10/2019</span></button>
            <button class="note" aria-label="Notifications">${svg("notify")}</button>
            <span class="desk"></span>
        </div>`;
    }
}

customElements.define("app-header", AppHeader);
customElements.define("title-bar", TitleBar);
customElements.define("tab-bar", TabBar);
customElements.define("ribbon-bar", RibbonBar);
customElements.define("ribbon-group", RibbonGroup);
customElements.define("big-button", BigButton);
customElements.define("small-button", SmallButton);
customElements.define("tool-button", ToolButton);
customElements.define("tool-sep", ToolSep);
customElements.define("combo-box", ComboBox);
customElements.define("style-gallery", StyleGallery);
customElements.define("formula-bar", FormulaBar);
customElements.define("sheet-grid", SheetGrid);
customElements.define("sheet-tabs", SheetTabs);
customElements.define("task-pane", TaskPane);
customElements.define("shape-options", ShapeOptions);
customElements.define("alt-text-form", AltTextForm);
customElements.define("status-bar", StatusBar);
customElements.define("win-taskbar", WinTaskbar);
</script>
</body>
</html>
